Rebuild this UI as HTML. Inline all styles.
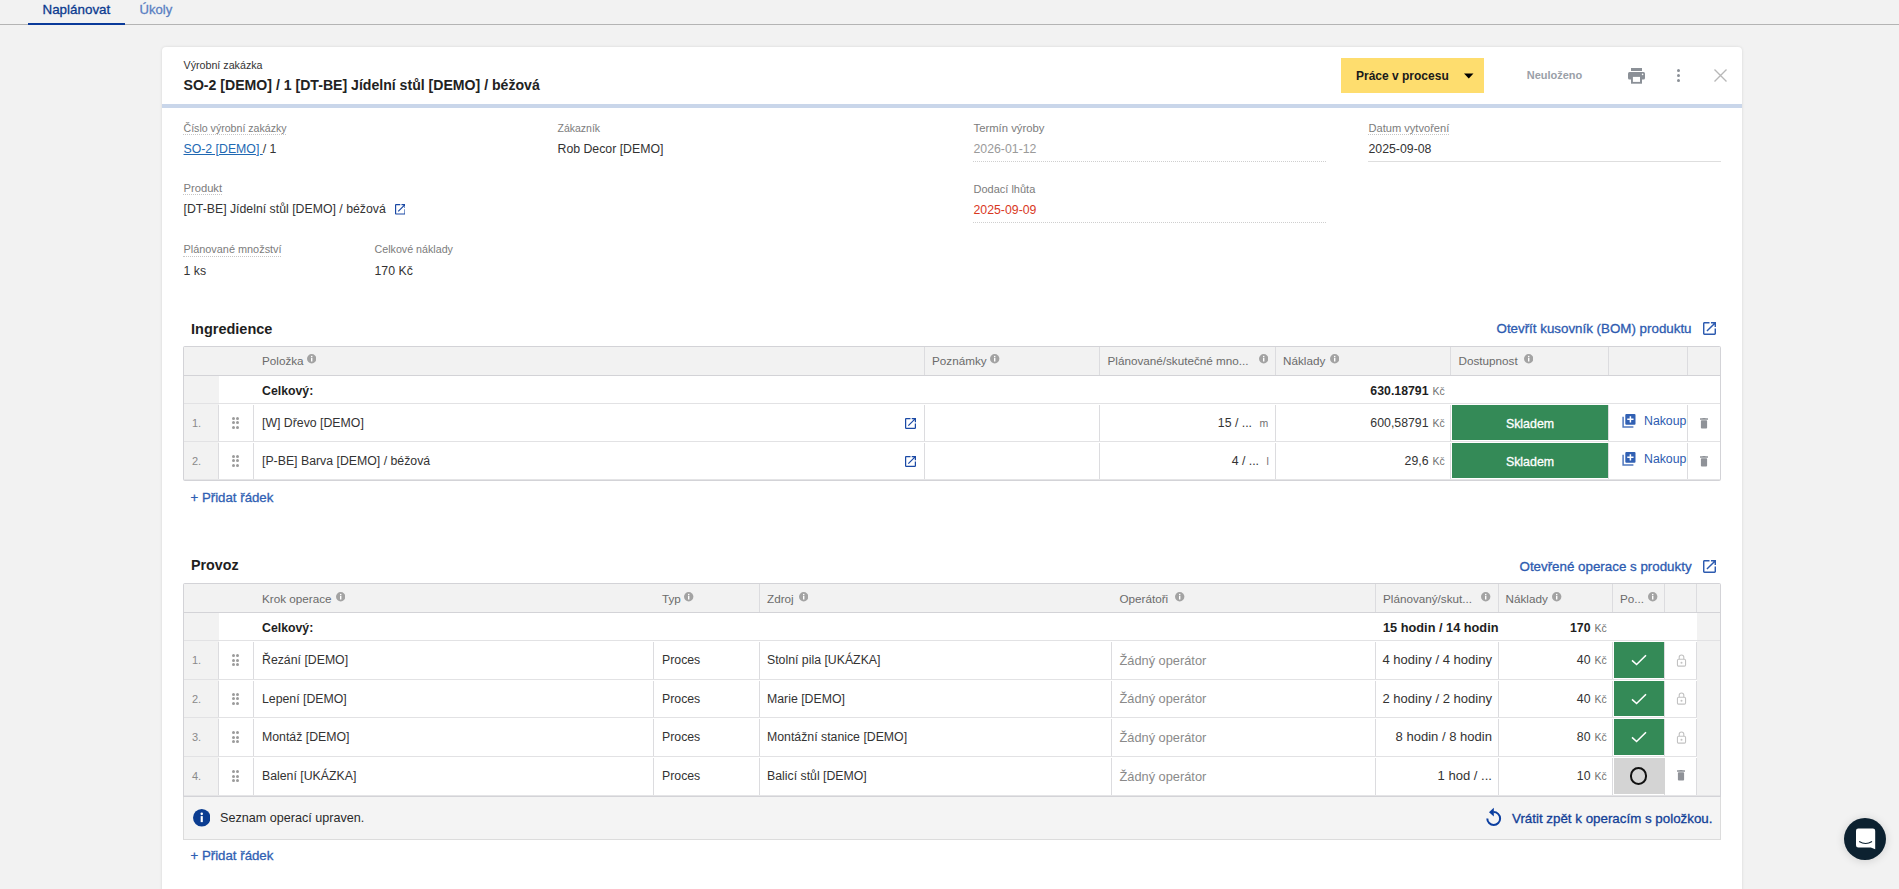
<!DOCTYPE html>
<html><head><meta charset="utf-8">
<style>
html,body{margin:0;padding:0;}
body{width:1899px;height:889px;overflow:hidden;background:#f2f2f2;font-family:"Liberation Sans",sans-serif;position:relative;}
#root{position:absolute;left:0;top:0;width:1899px;height:889px;overflow:hidden;}
#root div,#root svg{position:absolute;box-sizing:border-box;}
.t{white-space:nowrap;}
</style></head><body><div id="root">
<div class="t" style="top:0.00px;font-size:13.4px;line-height:20px;color:#0b3a8f;-webkit-text-stroke:0.3px #0b3a8f;left:42.5px;">Naplánovat</div>
<div class="t" style="top:0.00px;font-size:13.1px;line-height:20px;color:#5a7fc2;-webkit-text-stroke:0.3px #5a7fc2;left:139.5px;">Úkoly</div>
<div style="left:0px;top:24px;width:1899px;height:1px;background:#b4b4b4"></div>
<div style="left:28px;top:23px;width:97px;height:2px;background:#0a3a9a"></div>
<div style="left:162px;top:47px;width:1580px;height:900px;background:#fff;border-radius:4px;box-shadow:0 0 3px rgba(0,0,0,0.12)"></div>
<div class="t" style="top:55.00px;font-size:10.7px;line-height:20px;color:#333;left:183.5px;">Výrobní zakázka</div>
<div class="t" style="top:75.00px;font-size:14.1px;line-height:20px;color:#222;font-weight:700;left:183.5px;">SO-2 [DEMO] / 1 [DT-BE] Jídelní stůl [DEMO] / béžová</div>
<div style="left:162px;top:104px;width:1580px;height:4px;background:#c9d6ea"></div>
<div style="left:1341px;top:58px;width:143px;height:35px;background:#fedd6e"></div>
<div class="t" style="top:66.00px;font-size:12px;line-height:20px;color:#1a1a1a;font-weight:700;left:1356px;">Práce v procesu</div>
<svg style="left:1464px;top:73px" width="10" height="6"><path d="M0 0.5h9.5l-4.75 5z" fill="#000"/></svg>
<div class="t" style="top:65.00px;font-size:11px;line-height:20px;color:#9aa0a8;font-weight:700;left:1526.7px;">Neuloženo</div>
<svg style="left:1627px;top:67px" width="19" height="18" viewBox="0 0 19 18">
<rect x="4" y="1" width="11" height="3" fill="#8b9097"/>
<rect x="1" y="5" width="17" height="7.6" rx="1.5" fill="#8b9097"/>
<rect x="4" y="9" width="11" height="7.7" fill="#8b9097"/>
<rect x="5.9" y="9.9" width="7.1" height="5" fill="#fff"/>
<circle cx="15.6" cy="7.4" r="0.8" fill="#fff"/>
</svg>
<div style="left:1676.9px;top:68.60000000000001px;width:3.2px;height:3.2px;border-radius:50%;background:#8b9097"></div>
<div style="left:1676.9px;top:73.9px;width:3.2px;height:3.2px;border-radius:50%;background:#8b9097"></div>
<div style="left:1676.9px;top:79.2px;width:3.2px;height:3.2px;border-radius:50%;background:#8b9097"></div>
<svg style="left:1713px;top:68px" width="15" height="15"><path d="M1.5 1.5L13.5 13.5M13.5 1.5L1.5 13.5" stroke="#b8b8b8" stroke-width="1.4"/></svg>
<div class="t" style="top:118.00px;font-size:10.6px;line-height:20px;color:#7c7c7c;left:183.5px;">Číslo výrobní zakázky</div>
<div style="left:183px;top:134px;width:103px;height:1px;border-top:1px dotted #c6c6c6;height:0"></div>
<div class="t" style="top:139.00px;font-size:12.3px;line-height:20px;color:#333;left:183.5px;"><span style="color:#2169b3;text-decoration:underline">SO-2 [DEMO] </span>/ 1</div>
<div class="t" style="top:118.00px;font-size:10.5px;line-height:20px;color:#7c7c7c;left:557.5px;">Zákazník</div>
<div class="t" style="top:139.00px;font-size:12.3px;line-height:20px;color:#333;left:557.5px;">Rob Decor [DEMO]</div>
<div class="t" style="top:118.00px;font-size:11.3px;line-height:20px;color:#7c7c7c;left:973.5px;">Termín výroby</div>
<div class="t" style="top:139.00px;font-size:12.3px;line-height:20px;color:#9a9a9a;left:973.5px;">2026-01-12</div>
<div style="left:973px;top:161px;width:353px;height:0px;border-top:1px dotted #cfcfcf"></div>
<div class="t" style="top:118.00px;font-size:11.1px;line-height:20px;color:#7c7c7c;left:1368.5px;">Datum vytvoření</div>
<div style="left:1368px;top:134px;width:81px;height:0px;border-top:1px dotted #c6c6c6"></div>
<div class="t" style="top:139.00px;font-size:12.3px;line-height:20px;color:#333;left:1368.5px;">2025-09-08</div>
<div style="left:1368px;top:161px;width:353px;height:1px;background:#dedede"></div>
<div class="t" style="top:178.00px;font-size:11.2px;line-height:20px;color:#7c7c7c;left:183.5px;">Produkt</div>
<div style="left:183px;top:194px;width:39px;height:0px;border-top:1px dotted #c6c6c6"></div>
<div class="t" style="top:199.00px;font-size:12.3px;line-height:20px;color:#333;left:183.5px;">[DT-BE] Jídelní stůl [DEMO] / béžová</div>
<svg style="left:394.7px;top:204.3px" width="10.6" height="10.6" viewBox="3 3 18 18"><path d="M19 19H5V5h7V3H5c-1.11 0-2 .9-2 2v14c0 1.1.89 2 2 2h14c1.1 0 2-.9 2-2v-7h-2v7zM14 3v2h3.59l-9.83 9.83 1.41 1.41L19 6.41V10h2V3h-7z" fill="#1a49a5"/></svg>
<div class="t" style="top:179.00px;font-size:11px;line-height:20px;color:#7c7c7c;left:973.5px;">Dodací lhůta</div>
<div class="t" style="top:200.00px;font-size:12.3px;line-height:20px;color:#d9381e;left:973.5px;">2025-09-09</div>
<div style="left:973px;top:222px;width:353px;height:0px;border-top:1px dotted #cfcfcf"></div>
<div class="t" style="top:239.00px;font-size:10.9px;line-height:20px;color:#7c7c7c;left:183.5px;">Plánované množství</div>
<div style="left:183px;top:256px;width:98px;height:0px;border-top:1px dotted #c6c6c6"></div>
<div class="t" style="top:261.00px;font-size:12.3px;line-height:20px;color:#333;left:183.5px;">1 ks</div>
<div class="t" style="top:239.00px;font-size:10.7px;line-height:20px;color:#7c7c7c;left:374.5px;">Celkové náklady</div>
<div class="t" style="top:261.00px;font-size:12.3px;line-height:20px;color:#333;left:374.5px;">170 Kč</div>
<div class="t" style="top:319.00px;font-size:14.5px;line-height:20px;color:#1e1e1e;font-weight:700;left:191px;">Ingredience</div>
<div class="t" style="top:319.00px;font-size:13.35px;line-height:20px;color:#2d5bb0;-webkit-text-stroke:0.3px #2d5bb0;left:1496.5px;">Otevřít kusovník (BOM) produktu</div>
<svg style="left:1702.5px;top:322.3px" width="13" height="13" viewBox="3 3 18 18"><path d="M19 19H5V5h7V3H5c-1.11 0-2 .9-2 2v14c0 1.1.89 2 2 2h14c1.1 0 2-.9 2-2v-7h-2v7zM14 3v2h3.59l-9.83 9.83 1.41 1.41L19 6.41V10h2V3h-7z" fill="#2d5bb0"/></svg>
<div style="left:183px;top:346px;width:1538px;height:135px;border:1px solid #d3d3d7;border-bottom:2px solid #d3d3d7;background:#fff;border-radius:2px"></div>
<div style="left:184px;top:347px;width:1536px;height:28px;background:#f2f2f2"></div>
<div style="left:184px;top:375px;width:1536px;height:1px;background:#d3d3d7"></div>
<div style="left:924px;top:347px;width:1px;height:28px;background:#dcdcdf"></div>
<div style="left:1099px;top:347px;width:1px;height:28px;background:#dcdcdf"></div>
<div style="left:1275px;top:347px;width:1px;height:28px;background:#dcdcdf"></div>
<div style="left:1450px;top:347px;width:1px;height:28px;background:#dcdcdf"></div>
<div style="left:1608px;top:347px;width:1px;height:28px;background:#dcdcdf"></div>
<div style="left:1687px;top:347px;width:1px;height:28px;background:#dcdcdf"></div>
<div class="t" style="top:351.00px;font-size:11.7px;line-height:20px;color:#6b6b6b;left:262px;">Položka</div>
<svg style="left:306.8px;top:354.3px" width="9.4" height="9.4" viewBox="0 0 10 10"><circle cx="5" cy="5" r="5" fill="#a3a3a3"/><rect x="4.25" y="2" width="1.5" height="1.3" fill="#fff"/><rect x="4.25" y="4" width="1.5" height="4" fill="#fff"/></svg>
<div class="t" style="top:351.00px;font-size:11.7px;line-height:20px;color:#6b6b6b;left:932px;">Poznámky</div>
<svg style="left:990.3px;top:354.3px" width="9.4" height="9.4" viewBox="0 0 10 10"><circle cx="5" cy="5" r="5" fill="#a3a3a3"/><rect x="4.25" y="2" width="1.5" height="1.3" fill="#fff"/><rect x="4.25" y="4" width="1.5" height="4" fill="#fff"/></svg>
<div class="t" style="top:351.00px;font-size:11.7px;line-height:20px;color:#6b6b6b;left:1107.5px;">Plánované/skutečné mno...</div>
<svg style="left:1258.8px;top:354.3px" width="9.4" height="9.4" viewBox="0 0 10 10"><circle cx="5" cy="5" r="5" fill="#a3a3a3"/><rect x="4.25" y="2" width="1.5" height="1.3" fill="#fff"/><rect x="4.25" y="4" width="1.5" height="4" fill="#fff"/></svg>
<div class="t" style="top:351.00px;font-size:11.7px;line-height:20px;color:#6b6b6b;left:1283px;">Náklady</div>
<svg style="left:1329.8px;top:354.3px" width="9.4" height="9.4" viewBox="0 0 10 10"><circle cx="5" cy="5" r="5" fill="#a3a3a3"/><rect x="4.25" y="2" width="1.5" height="1.3" fill="#fff"/><rect x="4.25" y="4" width="1.5" height="4" fill="#fff"/></svg>
<div class="t" style="top:351.00px;font-size:11.7px;line-height:20px;color:#6b6b6b;left:1458.5px;">Dostupnost</div>
<svg style="left:1523.8px;top:354.3px" width="9.4" height="9.4" viewBox="0 0 10 10"><circle cx="5" cy="5" r="5" fill="#a3a3a3"/><rect x="4.25" y="2" width="1.5" height="1.3" fill="#fff"/><rect x="4.25" y="4" width="1.5" height="4" fill="#fff"/></svg>
<div style="left:184px;top:376px;width:35px;height:27px;background:#f2f2f2"></div>
<div class="t" style="top:381.00px;font-size:12.3px;line-height:20px;color:#1e1e1e;font-weight:700;left:262px;">Celkový:</div>
<div class="t" style="top:381.00px;font-size:12.3px;line-height:20px;color:#1e1e1e;font-weight:700;left:828.5px;width:600px;text-align:right;">630.18791</div>
<div class="t" style="top:381.00px;font-size:10.5px;line-height:20px;color:#707070;left:1432.5px;">Kč</div>
<div style="left:184px;top:403px;width:1536px;height:1px;background:#e2e2e4"></div>
<div style="left:184px;top:404px;width:35px;height:37px;background:#f2f2f2"></div>
<div style="left:218px;top:405px;width:1px;height:36px;background:#dcdcdf"></div>
<div style="left:253px;top:405px;width:1px;height:36px;background:#dcdcdf"></div>
<div style="left:924px;top:405px;width:1px;height:36px;background:#dcdcdf"></div>
<div style="left:1099px;top:405px;width:1px;height:36px;background:#dcdcdf"></div>
<div style="left:1275px;top:405px;width:1px;height:36px;background:#dcdcdf"></div>
<div style="left:1450px;top:405px;width:1px;height:36px;background:#dcdcdf"></div>
<div style="left:1608px;top:405px;width:1px;height:36px;background:#dcdcdf"></div>
<div style="left:1687px;top:405px;width:1px;height:36px;background:#dcdcdf"></div>
<div class="t" style="top:413.00px;font-size:11px;line-height:20px;color:#8a8a8a;left:192px;">1.</div>
<div style="left:231.9px;top:416.5px;width:3px;height:3px;border-radius:50%;background:#9b9b9b"></div>
<div style="left:231.9px;top:421.0px;width:3px;height:3px;border-radius:50%;background:#9b9b9b"></div>
<div style="left:231.9px;top:425.5px;width:3px;height:3px;border-radius:50%;background:#9b9b9b"></div>
<div style="left:236.1px;top:416.5px;width:3px;height:3px;border-radius:50%;background:#9b9b9b"></div>
<div style="left:236.1px;top:421.0px;width:3px;height:3px;border-radius:50%;background:#9b9b9b"></div>
<div style="left:236.1px;top:425.5px;width:3px;height:3px;border-radius:50%;background:#9b9b9b"></div>
<div class="t" style="top:413.00px;font-size:12.3px;line-height:20px;color:#333;left:262px;">[W] Dřevo [DEMO]</div>
<svg style="left:904.5px;top:418.3px" width="11" height="11" viewBox="3 3 18 18"><path d="M19 19H5V5h7V3H5c-1.11 0-2 .9-2 2v14c0 1.1.89 2 2 2h14c1.1 0 2-.9 2-2v-7h-2v7zM14 3v2h3.59l-9.83 9.83 1.41 1.41L19 6.41V10h2V3h-7z" fill="#1a49a5"/></svg>
<div class="t" style="top:413.00px;font-size:12.3px;line-height:20px;color:#333;left:652px;width:600px;text-align:right;">15 / ...</div>
<div class="t" style="top:413.00px;font-size:10.5px;line-height:20px;color:#707070;left:1259.5px;">m</div>
<div class="t" style="top:413.00px;font-size:12.3px;line-height:20px;color:#333;left:828.5px;width:600px;text-align:right;">600,58791</div>
<div class="t" style="top:413.00px;font-size:10.5px;line-height:20px;color:#707070;left:1432.5px;">Kč</div>
<div style="left:1452px;top:405px;width:156px;height:35px;background:#348a57"></div>
<div class="t" style="top:414.00px;font-size:12.4px;line-height:20px;color:#fff;-webkit-text-stroke:0.3px #fff;left:1230px;width:600px;text-align:center;">Skladem</div>
<svg style="left:1621.5px;top:414.0px" width="14" height="14" viewBox="0 0 14 14"><path d="M1.1 2.8V13h10.3" fill="none" stroke="#3160b3" stroke-width="1.5" opacity="0.85"/><rect x="3.3" y="0" width="10.2" height="10.7" rx="1" fill="#3160b3"/><path d="M8.4 2.2v6.3M5.25 5.35h6.3" stroke="#fff" stroke-width="1.5"/></svg>
<div class="t" style="left:1644px;top:410.5px;width:43px;overflow:hidden;font-size:12.3px;line-height:20px;color:#2d5bb0;font-weight:400">Nakoupit</div>
<svg style="left:1700px;top:417.5px" width="8" height="11" viewBox="0 0 8 11"><rect x="0" y="0.3" width="8" height="1.5" rx="0.3" fill="#8f9298"/><rect x="2.6" y="0" width="2.8" height="1" fill="#8f9298"/><rect x="0.9" y="2.2" width="6.2" height="8.3" rx="0.9" fill="#8f9298"/></svg>
<div style="left:184px;top:441px;width:1536px;height:1px;background:#e2e2e4"></div>
<div style="left:184px;top:442px;width:35px;height:37px;background:#f2f2f2"></div>
<div style="left:218px;top:443px;width:1px;height:36px;background:#dcdcdf"></div>
<div style="left:253px;top:443px;width:1px;height:36px;background:#dcdcdf"></div>
<div style="left:924px;top:443px;width:1px;height:36px;background:#dcdcdf"></div>
<div style="left:1099px;top:443px;width:1px;height:36px;background:#dcdcdf"></div>
<div style="left:1275px;top:443px;width:1px;height:36px;background:#dcdcdf"></div>
<div style="left:1450px;top:443px;width:1px;height:36px;background:#dcdcdf"></div>
<div style="left:1608px;top:443px;width:1px;height:36px;background:#dcdcdf"></div>
<div style="left:1687px;top:443px;width:1px;height:36px;background:#dcdcdf"></div>
<div class="t" style="top:451.00px;font-size:11px;line-height:20px;color:#8a8a8a;left:192px;">2.</div>
<div style="left:231.9px;top:454.5px;width:3px;height:3px;border-radius:50%;background:#9b9b9b"></div>
<div style="left:231.9px;top:459.0px;width:3px;height:3px;border-radius:50%;background:#9b9b9b"></div>
<div style="left:231.9px;top:463.5px;width:3px;height:3px;border-radius:50%;background:#9b9b9b"></div>
<div style="left:236.1px;top:454.5px;width:3px;height:3px;border-radius:50%;background:#9b9b9b"></div>
<div style="left:236.1px;top:459.0px;width:3px;height:3px;border-radius:50%;background:#9b9b9b"></div>
<div style="left:236.1px;top:463.5px;width:3px;height:3px;border-radius:50%;background:#9b9b9b"></div>
<div class="t" style="top:451.00px;font-size:12.3px;line-height:20px;color:#333;left:262px;">[P-BE] Barva [DEMO] / béžová</div>
<svg style="left:904.5px;top:456.3px" width="11" height="11" viewBox="3 3 18 18"><path d="M19 19H5V5h7V3H5c-1.11 0-2 .9-2 2v14c0 1.1.89 2 2 2h14c1.1 0 2-.9 2-2v-7h-2v7zM14 3v2h3.59l-9.83 9.83 1.41 1.41L19 6.41V10h2V3h-7z" fill="#1a49a5"/></svg>
<div class="t" style="top:451.00px;font-size:12.3px;line-height:20px;color:#333;left:659px;width:600px;text-align:right;">4 / ...</div>
<div class="t" style="top:451.00px;font-size:10.5px;line-height:20px;color:#707070;left:1266.5px;">l</div>
<div class="t" style="top:451.00px;font-size:12.3px;line-height:20px;color:#333;left:828.5px;width:600px;text-align:right;">29,6</div>
<div class="t" style="top:451.00px;font-size:10.5px;line-height:20px;color:#707070;left:1432.5px;">Kč</div>
<div style="left:1452px;top:443px;width:156px;height:35px;background:#348a57"></div>
<div class="t" style="top:452.00px;font-size:12.4px;line-height:20px;color:#fff;-webkit-text-stroke:0.3px #fff;left:1230px;width:600px;text-align:center;">Skladem</div>
<svg style="left:1621.5px;top:452.0px" width="14" height="14" viewBox="0 0 14 14"><path d="M1.1 2.8V13h10.3" fill="none" stroke="#3160b3" stroke-width="1.5" opacity="0.85"/><rect x="3.3" y="0" width="10.2" height="10.7" rx="1" fill="#3160b3"/><path d="M8.4 2.2v6.3M5.25 5.35h6.3" stroke="#fff" stroke-width="1.5"/></svg>
<div class="t" style="left:1644px;top:448.5px;width:43px;overflow:hidden;font-size:12.3px;line-height:20px;color:#2d5bb0;font-weight:400">Nakoupit</div>
<svg style="left:1700px;top:455.5px" width="8" height="11" viewBox="0 0 8 11"><rect x="0" y="0.3" width="8" height="1.5" rx="0.3" fill="#8f9298"/><rect x="2.6" y="0" width="2.8" height="1" fill="#8f9298"/><rect x="0.9" y="2.2" width="6.2" height="8.3" rx="0.9" fill="#8f9298"/></svg>
<div style="left:184px;top:479px;width:1536px;height:1px;background:#e4e4e6"></div>
<div class="t" style="top:488.00px;font-size:13.25px;line-height:20px;color:#2f5fb3;-webkit-text-stroke:0.3px #2f5fb3;left:190.5px;">+ Přidat řádek</div>
<div class="t" style="top:555.00px;font-size:14.3px;line-height:20px;color:#1e1e1e;font-weight:700;left:191px;">Provoz</div>
<div class="t" style="top:557.00px;font-size:13.35px;line-height:20px;color:#2d5bb0;-webkit-text-stroke:0.3px #2d5bb0;left:1519.5px;">Otevřené operace s produkty</div>
<svg style="left:1702.5px;top:560.3px" width="13" height="13" viewBox="3 3 18 18"><path d="M19 19H5V5h7V3H5c-1.11 0-2 .9-2 2v14c0 1.1.89 2 2 2h14c1.1 0 2-.9 2-2v-7h-2v7zM14 3v2h3.59l-9.83 9.83 1.41 1.41L19 6.41V10h2V3h-7z" fill="#2d5bb0"/></svg>
<div style="left:183px;top:583px;width:1538px;height:214px;border:1px solid #d3d3d7;border-bottom:2px solid #d3d3d7;background:#fff;border-radius:2px 2px 0 0"></div>
<div style="left:184px;top:584px;width:1536px;height:28px;background:#f2f2f2"></div>
<div style="left:184px;top:612px;width:1536px;height:1px;background:#d3d3d7"></div>
<div style="left:759px;top:584px;width:1px;height:28px;background:#dcdcdf"></div>
<div style="left:1375px;top:584px;width:1px;height:28px;background:#dcdcdf"></div>
<div style="left:1498px;top:584px;width:1px;height:28px;background:#dcdcdf"></div>
<div style="left:1612px;top:584px;width:1px;height:28px;background:#dcdcdf"></div>
<div style="left:1664px;top:584px;width:1px;height:28px;background:#dcdcdf"></div>
<div style="left:1696px;top:584px;width:1px;height:28px;background:#dcdcdf"></div>
<div class="t" style="top:589.00px;font-size:11.7px;line-height:20px;color:#6b6b6b;left:262px;">Krok operace</div>
<svg style="left:335.8px;top:592.3px" width="9.4" height="9.4" viewBox="0 0 10 10"><circle cx="5" cy="5" r="5" fill="#a3a3a3"/><rect x="4.25" y="2" width="1.5" height="1.3" fill="#fff"/><rect x="4.25" y="4" width="1.5" height="4" fill="#fff"/></svg>
<div class="t" style="top:589.00px;font-size:11.7px;line-height:20px;color:#6b6b6b;left:662px;">Typ</div>
<svg style="left:684.3px;top:592.3px" width="9.4" height="9.4" viewBox="0 0 10 10"><circle cx="5" cy="5" r="5" fill="#a3a3a3"/><rect x="4.25" y="2" width="1.5" height="1.3" fill="#fff"/><rect x="4.25" y="4" width="1.5" height="4" fill="#fff"/></svg>
<div class="t" style="top:589.00px;font-size:11.7px;line-height:20px;color:#6b6b6b;left:767px;">Zdroj</div>
<svg style="left:798.8px;top:592.3px" width="9.4" height="9.4" viewBox="0 0 10 10"><circle cx="5" cy="5" r="5" fill="#a3a3a3"/><rect x="4.25" y="2" width="1.5" height="1.3" fill="#fff"/><rect x="4.25" y="4" width="1.5" height="4" fill="#fff"/></svg>
<div class="t" style="top:589.00px;font-size:11.7px;line-height:20px;color:#6b6b6b;left:1119.5px;">Operátoři</div>
<svg style="left:1175.3px;top:592.3px" width="9.4" height="9.4" viewBox="0 0 10 10"><circle cx="5" cy="5" r="5" fill="#a3a3a3"/><rect x="4.25" y="2" width="1.5" height="1.3" fill="#fff"/><rect x="4.25" y="4" width="1.5" height="4" fill="#fff"/></svg>
<div class="t" style="top:589.00px;font-size:11.7px;line-height:20px;color:#6b6b6b;left:1383px;">Plánovaný/skut...</div>
<svg style="left:1481.3px;top:592.3px" width="9.4" height="9.4" viewBox="0 0 10 10"><circle cx="5" cy="5" r="5" fill="#a3a3a3"/><rect x="4.25" y="2" width="1.5" height="1.3" fill="#fff"/><rect x="4.25" y="4" width="1.5" height="4" fill="#fff"/></svg>
<div class="t" style="top:589.00px;font-size:11.7px;line-height:20px;color:#6b6b6b;left:1505.5px;">Náklady</div>
<svg style="left:1552.3px;top:592.3px" width="9.4" height="9.4" viewBox="0 0 10 10"><circle cx="5" cy="5" r="5" fill="#a3a3a3"/><rect x="4.25" y="2" width="1.5" height="1.3" fill="#fff"/><rect x="4.25" y="4" width="1.5" height="4" fill="#fff"/></svg>
<div class="t" style="top:589.00px;font-size:11.7px;line-height:20px;color:#6b6b6b;left:1620px;">Po...</div>
<svg style="left:1648.3px;top:592.3px" width="9.4" height="9.4" viewBox="0 0 10 10"><circle cx="5" cy="5" r="5" fill="#a3a3a3"/><rect x="4.25" y="2" width="1.5" height="1.3" fill="#fff"/><rect x="4.25" y="4" width="1.5" height="4" fill="#fff"/></svg>
<div style="left:184px;top:613px;width:35px;height:27px;background:#f2f2f2"></div>
<div style="left:1697px;top:613px;width:23px;height:182px;background:#f2f2f2"></div>
<div class="t" style="top:618.00px;font-size:12.3px;line-height:20px;color:#1e1e1e;font-weight:700;left:262px;">Celkový:</div>
<div class="t" style="top:618.00px;font-size:12.75px;line-height:20px;color:#1e1e1e;font-weight:700;left:1383px;">15 hodin / 14 hodin</div>
<div class="t" style="top:618.00px;font-size:12.3px;line-height:20px;color:#1e1e1e;font-weight:700;left:990.5px;width:600px;text-align:right;">170</div>
<div class="t" style="top:618.00px;font-size:10.5px;line-height:20px;color:#707070;left:1594.5px;">Kč</div>
<div style="left:184px;top:640px;width:1536px;height:1px;background:#e2e2e4"></div>
<div style="left:184px;top:641px;width:35px;height:38px;background:#f2f2f2"></div>
<div style="left:218px;top:642px;width:1px;height:37px;background:#dcdcdf"></div>
<div style="left:253px;top:642px;width:1px;height:37px;background:#dcdcdf"></div>
<div style="left:653px;top:642px;width:1px;height:37px;background:#dcdcdf"></div>
<div style="left:759px;top:642px;width:1px;height:37px;background:#dcdcdf"></div>
<div style="left:1111px;top:642px;width:1px;height:37px;background:#dcdcdf"></div>
<div style="left:1375px;top:642px;width:1px;height:37px;background:#dcdcdf"></div>
<div style="left:1498px;top:642px;width:1px;height:37px;background:#dcdcdf"></div>
<div style="left:1612px;top:642px;width:1px;height:37px;background:#dcdcdf"></div>
<div style="left:1664px;top:642px;width:1px;height:37px;background:#dcdcdf"></div>
<div style="left:1696px;top:642px;width:1px;height:37px;background:#dcdcdf"></div>
<div class="t" style="top:650.00px;font-size:11px;line-height:20px;color:#8a8a8a;left:192px;">1.</div>
<div style="left:231.9px;top:654.0px;width:3px;height:3px;border-radius:50%;background:#9b9b9b"></div>
<div style="left:231.9px;top:658.5px;width:3px;height:3px;border-radius:50%;background:#9b9b9b"></div>
<div style="left:231.9px;top:663.0px;width:3px;height:3px;border-radius:50%;background:#9b9b9b"></div>
<div style="left:236.1px;top:654.0px;width:3px;height:3px;border-radius:50%;background:#9b9b9b"></div>
<div style="left:236.1px;top:658.5px;width:3px;height:3px;border-radius:50%;background:#9b9b9b"></div>
<div style="left:236.1px;top:663.0px;width:3px;height:3px;border-radius:50%;background:#9b9b9b"></div>
<div class="t" style="top:650.00px;font-size:12.3px;line-height:20px;color:#333;left:262px;">Řezání [DEMO]</div>
<div class="t" style="top:650.00px;font-size:12.3px;line-height:20px;color:#333;left:662px;">Proces</div>
<div class="t" style="top:650.00px;font-size:12.3px;line-height:20px;color:#333;left:767px;">Stolní pila [UKÁZKA]</div>
<div class="t" style="top:651.00px;font-size:12.8px;line-height:20px;color:#8a8a8a;left:1119.5px;">Žádný operátor</div>
<div class="t" style="top:650.00px;font-size:13.05px;line-height:20px;color:#333;left:892px;width:600px;text-align:right;">4 hodiny / 4 hodiny</div>
<div class="t" style="top:650.00px;font-size:12.3px;line-height:20px;color:#333;left:990.5px;width:600px;text-align:right;">40</div>
<div class="t" style="top:650.00px;font-size:10.5px;line-height:20px;color:#707070;left:1594.5px;">Kč</div>
<div style="left:1614px;top:642px;width:50px;height:36px;background:#348a57"></div>
<svg style="left:1631.0px;top:654.0px" width="16" height="12" viewBox="0 0 16 12"><path d="M1 6.3l4.6 4.2L15 1.2" fill="none" stroke="#fff" stroke-width="1.6"/></svg>
<svg style="left:1675.5px;top:653.5px" width="11" height="13" viewBox="0 0 11 13"><path d="M3.2 5.2V3.3a2.3 2.3 0 0 1 4.6 0V5.2" fill="none" stroke="#c2c2c2" stroke-width="1.1"/><rect x="1.45" y="5.2" width="8.1" height="6.9" rx="1.2" fill="none" stroke="#c2c2c2" stroke-width="1.1"/><circle cx="5.5" cy="8.7" r="1" fill="#c2c2c2"/></svg>
<div style="left:184px;top:679px;width:1513px;height:1px;background:#e2e2e4"></div>
<div style="left:184px;top:680px;width:35px;height:37px;background:#f2f2f2"></div>
<div style="left:218px;top:681px;width:1px;height:36px;background:#dcdcdf"></div>
<div style="left:253px;top:681px;width:1px;height:36px;background:#dcdcdf"></div>
<div style="left:653px;top:681px;width:1px;height:36px;background:#dcdcdf"></div>
<div style="left:759px;top:681px;width:1px;height:36px;background:#dcdcdf"></div>
<div style="left:1111px;top:681px;width:1px;height:36px;background:#dcdcdf"></div>
<div style="left:1375px;top:681px;width:1px;height:36px;background:#dcdcdf"></div>
<div style="left:1498px;top:681px;width:1px;height:36px;background:#dcdcdf"></div>
<div style="left:1612px;top:681px;width:1px;height:36px;background:#dcdcdf"></div>
<div style="left:1664px;top:681px;width:1px;height:36px;background:#dcdcdf"></div>
<div style="left:1696px;top:681px;width:1px;height:36px;background:#dcdcdf"></div>
<div class="t" style="top:689.00px;font-size:11px;line-height:20px;color:#8a8a8a;left:192px;">2.</div>
<div style="left:231.9px;top:692.5px;width:3px;height:3px;border-radius:50%;background:#9b9b9b"></div>
<div style="left:231.9px;top:697.0px;width:3px;height:3px;border-radius:50%;background:#9b9b9b"></div>
<div style="left:231.9px;top:701.5px;width:3px;height:3px;border-radius:50%;background:#9b9b9b"></div>
<div style="left:236.1px;top:692.5px;width:3px;height:3px;border-radius:50%;background:#9b9b9b"></div>
<div style="left:236.1px;top:697.0px;width:3px;height:3px;border-radius:50%;background:#9b9b9b"></div>
<div style="left:236.1px;top:701.5px;width:3px;height:3px;border-radius:50%;background:#9b9b9b"></div>
<div class="t" style="top:689.00px;font-size:12.3px;line-height:20px;color:#333;left:262px;">Lepení [DEMO]</div>
<div class="t" style="top:689.00px;font-size:12.3px;line-height:20px;color:#333;left:662px;">Proces</div>
<div class="t" style="top:689.00px;font-size:12.3px;line-height:20px;color:#333;left:767px;">Marie [DEMO]</div>
<div class="t" style="top:689.00px;font-size:12.8px;line-height:20px;color:#8a8a8a;left:1119.5px;">Žádný operátor</div>
<div class="t" style="top:689.00px;font-size:13.05px;line-height:20px;color:#333;left:892px;width:600px;text-align:right;">2 hodiny / 2 hodiny</div>
<div class="t" style="top:689.00px;font-size:12.3px;line-height:20px;color:#333;left:990.5px;width:600px;text-align:right;">40</div>
<div class="t" style="top:689.00px;font-size:10.5px;line-height:20px;color:#707070;left:1594.5px;">Kč</div>
<div style="left:1614px;top:681px;width:50px;height:35px;background:#348a57"></div>
<svg style="left:1631.0px;top:692.5px" width="16" height="12" viewBox="0 0 16 12"><path d="M1 6.3l4.6 4.2L15 1.2" fill="none" stroke="#fff" stroke-width="1.6"/></svg>
<svg style="left:1675.5px;top:692.0px" width="11" height="13" viewBox="0 0 11 13"><path d="M3.2 5.2V3.3a2.3 2.3 0 0 1 4.6 0V5.2" fill="none" stroke="#c2c2c2" stroke-width="1.1"/><rect x="1.45" y="5.2" width="8.1" height="6.9" rx="1.2" fill="none" stroke="#c2c2c2" stroke-width="1.1"/><circle cx="5.5" cy="8.7" r="1" fill="#c2c2c2"/></svg>
<div style="left:184px;top:717px;width:1513px;height:1px;background:#e2e2e4"></div>
<div style="left:184px;top:718px;width:35px;height:38px;background:#f2f2f2"></div>
<div style="left:218px;top:719px;width:1px;height:37px;background:#dcdcdf"></div>
<div style="left:253px;top:719px;width:1px;height:37px;background:#dcdcdf"></div>
<div style="left:653px;top:719px;width:1px;height:37px;background:#dcdcdf"></div>
<div style="left:759px;top:719px;width:1px;height:37px;background:#dcdcdf"></div>
<div style="left:1111px;top:719px;width:1px;height:37px;background:#dcdcdf"></div>
<div style="left:1375px;top:719px;width:1px;height:37px;background:#dcdcdf"></div>
<div style="left:1498px;top:719px;width:1px;height:37px;background:#dcdcdf"></div>
<div style="left:1612px;top:719px;width:1px;height:37px;background:#dcdcdf"></div>
<div style="left:1664px;top:719px;width:1px;height:37px;background:#dcdcdf"></div>
<div style="left:1696px;top:719px;width:1px;height:37px;background:#dcdcdf"></div>
<div class="t" style="top:727.00px;font-size:11px;line-height:20px;color:#8a8a8a;left:192px;">3.</div>
<div style="left:231.9px;top:731.0px;width:3px;height:3px;border-radius:50%;background:#9b9b9b"></div>
<div style="left:231.9px;top:735.5px;width:3px;height:3px;border-radius:50%;background:#9b9b9b"></div>
<div style="left:231.9px;top:740.0px;width:3px;height:3px;border-radius:50%;background:#9b9b9b"></div>
<div style="left:236.1px;top:731.0px;width:3px;height:3px;border-radius:50%;background:#9b9b9b"></div>
<div style="left:236.1px;top:735.5px;width:3px;height:3px;border-radius:50%;background:#9b9b9b"></div>
<div style="left:236.1px;top:740.0px;width:3px;height:3px;border-radius:50%;background:#9b9b9b"></div>
<div class="t" style="top:727.00px;font-size:12.3px;line-height:20px;color:#333;left:262px;">Montáž [DEMO]</div>
<div class="t" style="top:727.00px;font-size:12.3px;line-height:20px;color:#333;left:662px;">Proces</div>
<div class="t" style="top:727.00px;font-size:12.3px;line-height:20px;color:#333;left:767px;">Montážní stanice [DEMO]</div>
<div class="t" style="top:728.00px;font-size:12.8px;line-height:20px;color:#8a8a8a;left:1119.5px;">Žádný operátor</div>
<div class="t" style="top:727.00px;font-size:13.05px;line-height:20px;color:#333;left:892px;width:600px;text-align:right;">8 hodin / 8 hodin</div>
<div class="t" style="top:727.00px;font-size:12.3px;line-height:20px;color:#333;left:990.5px;width:600px;text-align:right;">80</div>
<div class="t" style="top:727.00px;font-size:10.5px;line-height:20px;color:#707070;left:1594.5px;">Kč</div>
<div style="left:1614px;top:719px;width:50px;height:36px;background:#348a57"></div>
<svg style="left:1631.0px;top:731.0px" width="16" height="12" viewBox="0 0 16 12"><path d="M1 6.3l4.6 4.2L15 1.2" fill="none" stroke="#fff" stroke-width="1.6"/></svg>
<svg style="left:1675.5px;top:730.5px" width="11" height="13" viewBox="0 0 11 13"><path d="M3.2 5.2V3.3a2.3 2.3 0 0 1 4.6 0V5.2" fill="none" stroke="#c2c2c2" stroke-width="1.1"/><rect x="1.45" y="5.2" width="8.1" height="6.9" rx="1.2" fill="none" stroke="#c2c2c2" stroke-width="1.1"/><circle cx="5.5" cy="8.7" r="1" fill="#c2c2c2"/></svg>
<div style="left:184px;top:756px;width:1513px;height:1px;background:#e2e2e4"></div>
<div style="left:184px;top:757px;width:35px;height:38px;background:#f2f2f2"></div>
<div style="left:218px;top:758px;width:1px;height:37px;background:#dcdcdf"></div>
<div style="left:253px;top:758px;width:1px;height:37px;background:#dcdcdf"></div>
<div style="left:653px;top:758px;width:1px;height:37px;background:#dcdcdf"></div>
<div style="left:759px;top:758px;width:1px;height:37px;background:#dcdcdf"></div>
<div style="left:1111px;top:758px;width:1px;height:37px;background:#dcdcdf"></div>
<div style="left:1375px;top:758px;width:1px;height:37px;background:#dcdcdf"></div>
<div style="left:1498px;top:758px;width:1px;height:37px;background:#dcdcdf"></div>
<div style="left:1612px;top:758px;width:1px;height:37px;background:#dcdcdf"></div>
<div style="left:1664px;top:758px;width:1px;height:37px;background:#dcdcdf"></div>
<div style="left:1696px;top:758px;width:1px;height:37px;background:#dcdcdf"></div>
<div class="t" style="top:766.00px;font-size:11px;line-height:20px;color:#8a8a8a;left:192px;">4.</div>
<div style="left:231.9px;top:770.0px;width:3px;height:3px;border-radius:50%;background:#9b9b9b"></div>
<div style="left:231.9px;top:774.5px;width:3px;height:3px;border-radius:50%;background:#9b9b9b"></div>
<div style="left:231.9px;top:779.0px;width:3px;height:3px;border-radius:50%;background:#9b9b9b"></div>
<div style="left:236.1px;top:770.0px;width:3px;height:3px;border-radius:50%;background:#9b9b9b"></div>
<div style="left:236.1px;top:774.5px;width:3px;height:3px;border-radius:50%;background:#9b9b9b"></div>
<div style="left:236.1px;top:779.0px;width:3px;height:3px;border-radius:50%;background:#9b9b9b"></div>
<div class="t" style="top:766.00px;font-size:12.3px;line-height:20px;color:#333;left:262px;">Balení [UKÁZKA]</div>
<div class="t" style="top:766.00px;font-size:12.3px;line-height:20px;color:#333;left:662px;">Proces</div>
<div class="t" style="top:766.00px;font-size:12.3px;line-height:20px;color:#333;left:767px;">Balicí stůl [DEMO]</div>
<div class="t" style="top:767.00px;font-size:12.8px;line-height:20px;color:#8a8a8a;left:1119.5px;">Žádný operátor</div>
<div class="t" style="top:766.00px;font-size:13.05px;line-height:20px;color:#333;left:892px;width:600px;text-align:right;">1 hod / ...</div>
<div class="t" style="top:766.00px;font-size:12.3px;line-height:20px;color:#333;left:990.5px;width:600px;text-align:right;">10</div>
<div class="t" style="top:766.00px;font-size:10.5px;line-height:20px;color:#707070;left:1594.5px;">Kč</div>
<div style="left:1614px;top:758px;width:51px;height:36px;background:#d4d4d4"></div>
<div style="left:1629.6px;top:767.3px;width:17.4px;height:17.4px;border-radius:50%;border:2px solid #111"></div>
<svg style="left:1677px;top:770.3px" width="8" height="11" viewBox="0 0 8 11"><rect x="0" y="0.3" width="8" height="1.5" rx="0.3" fill="#8f9298"/><rect x="2.6" y="0" width="2.8" height="1" fill="#8f9298"/><rect x="0.9" y="2.2" width="6.2" height="8.3" rx="0.9" fill="#8f9298"/></svg>
<div style="left:184px;top:795px;width:1536px;height:1px;background:#e4e4e6"></div>
<div style="left:183px;top:797px;width:1538px;height:43px;background:#f4f4f4;border:1px solid #dcdcdc;border-top:none"></div>
<svg style="left:192.5px;top:809px" width="17.5" height="17.5" viewBox="0 0 18 18"><circle cx="9" cy="9" r="9" fill="#0b3d91"/><circle cx="9" cy="5" r="1.3" fill="#fff"/><rect x="7.9" y="7.3" width="2.2" height="6.2" fill="#fff"/></svg>
<div class="t" style="top:808.00px;font-size:12.6px;line-height:20px;color:#2a2a2a;left:220px;">Seznam operací upraven.</div>
<svg style="left:1484px;top:806px" width="20" height="22" viewBox="1484 806 20 22"><path d="M1487.3 818.4A6.4 6.4 0 1 0 1493.5 812.1" fill="none" stroke="#0b3ea0" stroke-width="2"/><path d="M1493.8 807.8L1489 812.2L1493.8 816.6z" fill="#0b3ea0"/></svg>
<div class="t" style="top:809.00px;font-size:13.35px;line-height:20px;color:#123f97;-webkit-text-stroke:0.3px #123f97;left:1512px;">Vrátit zpět k operacím s položkou.</div>
<div class="t" style="top:846.00px;font-size:13.25px;line-height:20px;color:#2f5fb3;-webkit-text-stroke:0.3px #2f5fb3;left:190.5px;">+ Přidat řádek</div>
<div style="left:1844px;top:818px;width:42px;height:42px;border-radius:50%;background:#0c2130;box-shadow:0 1px 10px rgba(0,0,0,0.14)"></div>
<svg style="left:1856px;top:827.5px" width="20" height="23" viewBox="0 0 20 23"><path d="M2.3 0.5h14.6a2.3 2.3 0 0 1 2.3 2.3V21.3L14.8 19.5H2.3A2.3 2.3 0 0 1 0 17.2V2.8A2.3 2.3 0 0 1 2.3 0.5z" fill="#fff"/><path d="M3.2 13.5Q9.6 17.5 16 13.5" fill="none" stroke="#0c2130" stroke-width="1.1"/></svg>
</div></body></html>
